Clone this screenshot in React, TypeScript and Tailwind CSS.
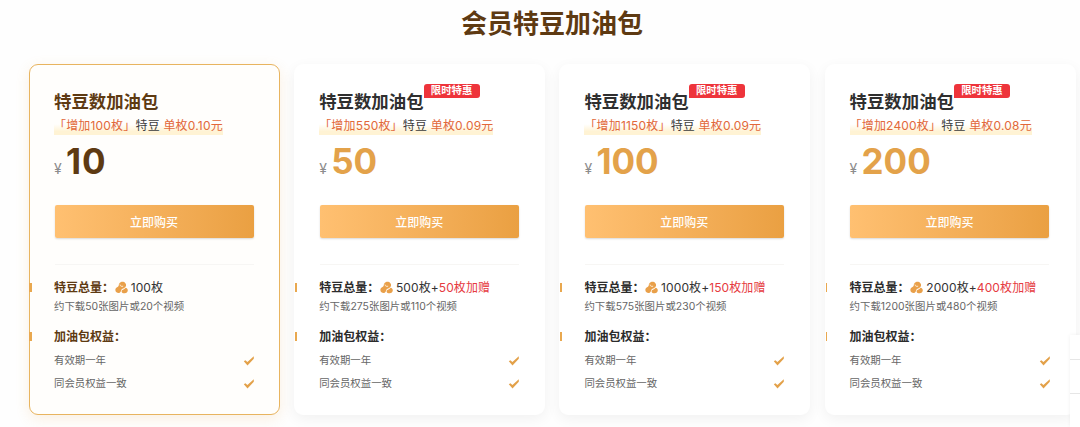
type Pack = {
  price: number
  amount: string
  unit: string
  base: string
  bonus?: string
  usage: string
  active?: boolean
}

const PACKS: Pack[] = [
  { price: 10, amount: "100", unit: "0.10", base: "100枚", usage: "约下载50张图片或20个视频", active: true },
  { price: 50, amount: "550", unit: "0.09", base: "500枚+", bonus: "50枚加赠", usage: "约下载275张图片或110个视频" },
  { price: 100, amount: "1150", unit: "0.09", base: "1000枚+", bonus: "150枚加赠", usage: "约下载575张图片或230个视频" },
  { price: 200, amount: "2400", unit: "0.08", base: "2000枚+", bonus: "400枚加赠", usage: "约下载1200张图片或480个视频" },
]

const RIGHTS = ["有效期一年", "同会员权益一致"]

function BeanIcon() {
  return (
    <svg viewBox="0 0 14 14" className="mr-[3px] mb-px ml-[0.7px] h-[13px] w-[13px] shrink-0">
      <path
        d="M4.6 2.6C6 .4 9.600 .3 11.200 2.300c1.200 1.600.8 3.200-.3 4.300C9.500 8.100 8.200 7.600 7.200 9c-.9 1.300-.6 3-2.200 3.700-2 .8-4.400-.6-4.600-2.800-.2-1.900 1-2.900 2.300-3.500C4.700 5.500 3.600 4.200 4.600 2.600z"
        fill="#e9a04a"
      />
      <path d="M11.400 7.200c1.400.2 2.500 1.400 2.400 3-.1 1.700-1.500 3-3.400 3-1.800 0-3.300-.7-3.300-2 0-2.200 2.300-1.300 4.300-4z" fill="#e9a04a" />
      <path d="M5.400 4.200c.3 1.500 1.600 1.900 3 1.500" fill="none" stroke="#fff6e8" strokeWidth=".9" strokeLinecap="round" />
    </svg>
  )
}

function CheckIcon() {
  return (
    <svg viewBox="0 0 12 12" className="-mr-px h-3 w-3">
      <path d="M.8 6.300 2.400 5.200l2 1.900L10.800 1.200v2.500L4.500 10.400z" fill="#e3a149" />
    </svg>
  )
}

function Heading({ text, active }: { text: string; active?: boolean }) {
  return (
    <>
      <span className={active ? "mb-[2px] -ml-[25px] h-[9px] w-[2.5px] shrink-0 bg-[#e9a84f]" : "mb-[2px] -ml-[24px] h-[9px] w-[1.5px] shrink-0 bg-[#e9a84f]"} />
      <span className={active ? "ml-[22.5px] font-bold text-[#5e3a12]" : "ml-[22.5px] font-bold text-[#2c2c2c]"}>{text}</span>
    </>
  )
}

function PackCard({ pack }: { pack: Pack }) {
  const { active } = pack
  return (
    <div
      className={
        active
          ? "h-[351px] w-[251px] shrink-0 rounded-[9px] border border-[#e8b45f] bg-[#fffefc] pt-[25px] pl-6 shadow-[0_4px_14px_rgba(232,160,74,0.16)]"
          : "h-[351px] w-[251px] shrink-0 rounded-[9px] border border-white bg-white pt-[25px] pl-6 shadow-[0_4px_14px_rgba(0,0,0,0.055)]"
      }
    >
      <div className="flex h-6 items-center">
        <h2 className={active ? "relative text-[17.4px] font-bold text-[#5e3a12]" : "relative text-[17.4px] font-bold text-[#2f2f2f]"}>
          特豆数加油包
          {!active && (
            <span className="absolute -top-[5px] left-full flex h-[14px] w-14 items-center justify-center rounded-[3px] rounded-bl-none bg-[#ee343b] pt-px text-[10.4px] leading-none font-bold whitespace-nowrap text-white">
              限时特惠
            </span>
          )}
        </h2>
      </div>

      <div className="mt-[3px] flex h-[18px] items-center">
        <p className="bg-linear-to-b from-transparent from-40% to-[#fff3d4] to-80% text-[12px] leading-[18px] tracking-[0.18px] whitespace-pre text-[#e2683a]">
          「增加{pack.amount}枚」<span className="text-[#3c3c3c]">特豆</span> 单枚{pack.unit}元
        </p>
      </div>

      <div className="mt-2 flex h-9 items-baseline leading-9">
        <span className="w-3 text-[14px] text-[#8c8c8c]">¥</span>
        <span className={active ? "text-[35px] font-bold tracking-[0.8px] text-[#5e3a12]" : "text-[35px] font-bold text-[#e3a24a]"}>{pack.price}</span>
      </div>

      <button className="mt-[26px] ml-[0.5px] flex h-[33px] w-[199px] items-center justify-center rounded-[2px] bg-linear-to-r from-[#ffc071] to-[#eaa042] pt-[2px] text-[12px] font-medium text-white shadow-[0_1px_2px_rgba(0,0,0,0.15)]">
        立即购买
      </button>

      <div className="mt-[26px] ml-[0.5px] h-px w-[199px] bg-[#f7f6f4]" />

      <div className="mt-[14px] flex h-[18px] items-center text-[12px] whitespace-nowrap text-[#333]">
        <Heading text="特豆总量：" active={active} />
        <BeanIcon />
        <span className="tracking-[0.1px]">{pack.base}</span>
        <span className="tracking-[0.1px] text-[#e63b3f]">{pack.bonus}</span>
      </div>
      <p className="mt-[2px] h-4 text-[10.4px] leading-4 tracking-[0.03px] text-[#666]">{pack.usage}</p>

      <div className="mt-[13px] flex h-[18px] items-center text-[12px]">
        <Heading text="加油包权益：" active={active} />
      </div>
      <ul className="mt-[3px] w-[200px]">
        {RIGHTS.map((right) => (
          <li key={right} className="flex h-[23px] items-center justify-between text-[10.4px] text-[#666]">
            {right}
            <CheckIcon />
          </li>
        ))}
      </ul>
    </div>
  )
}

export default function App() {
  return (
    <div className="relative h-[427px] w-[1080px] overflow-hidden bg-[#fefefe] font-[Inter,'Noto_Sans_CJK_SC',sans-serif]" lang="zh-CN">
      <h1 className="flex h-[46px] items-center justify-center pl-6 text-[26px] font-bold text-[#5e3a12]">会员特豆加油包</h1>
      <div className="mt-[18px] ml-[29px] flex gap-[14.2px]">
        {PACKS.map((pack) => (
          <PackCard key={pack.price} pack={pack} />
        ))}
      </div>

      {/* Edge of the floating side toolbar */}
      <div className="absolute right-0 bottom-0 h-[92px] w-[10px] bg-white shadow-[0_0_4px_rgba(0,0,0,0.06)]">
        <div className="h-[25px] border-b border-[#e6e6e6]" />
        <div className="h-[34px] border-b border-[#e6e6e6]" />
      </div>
    </div>
  )
}
